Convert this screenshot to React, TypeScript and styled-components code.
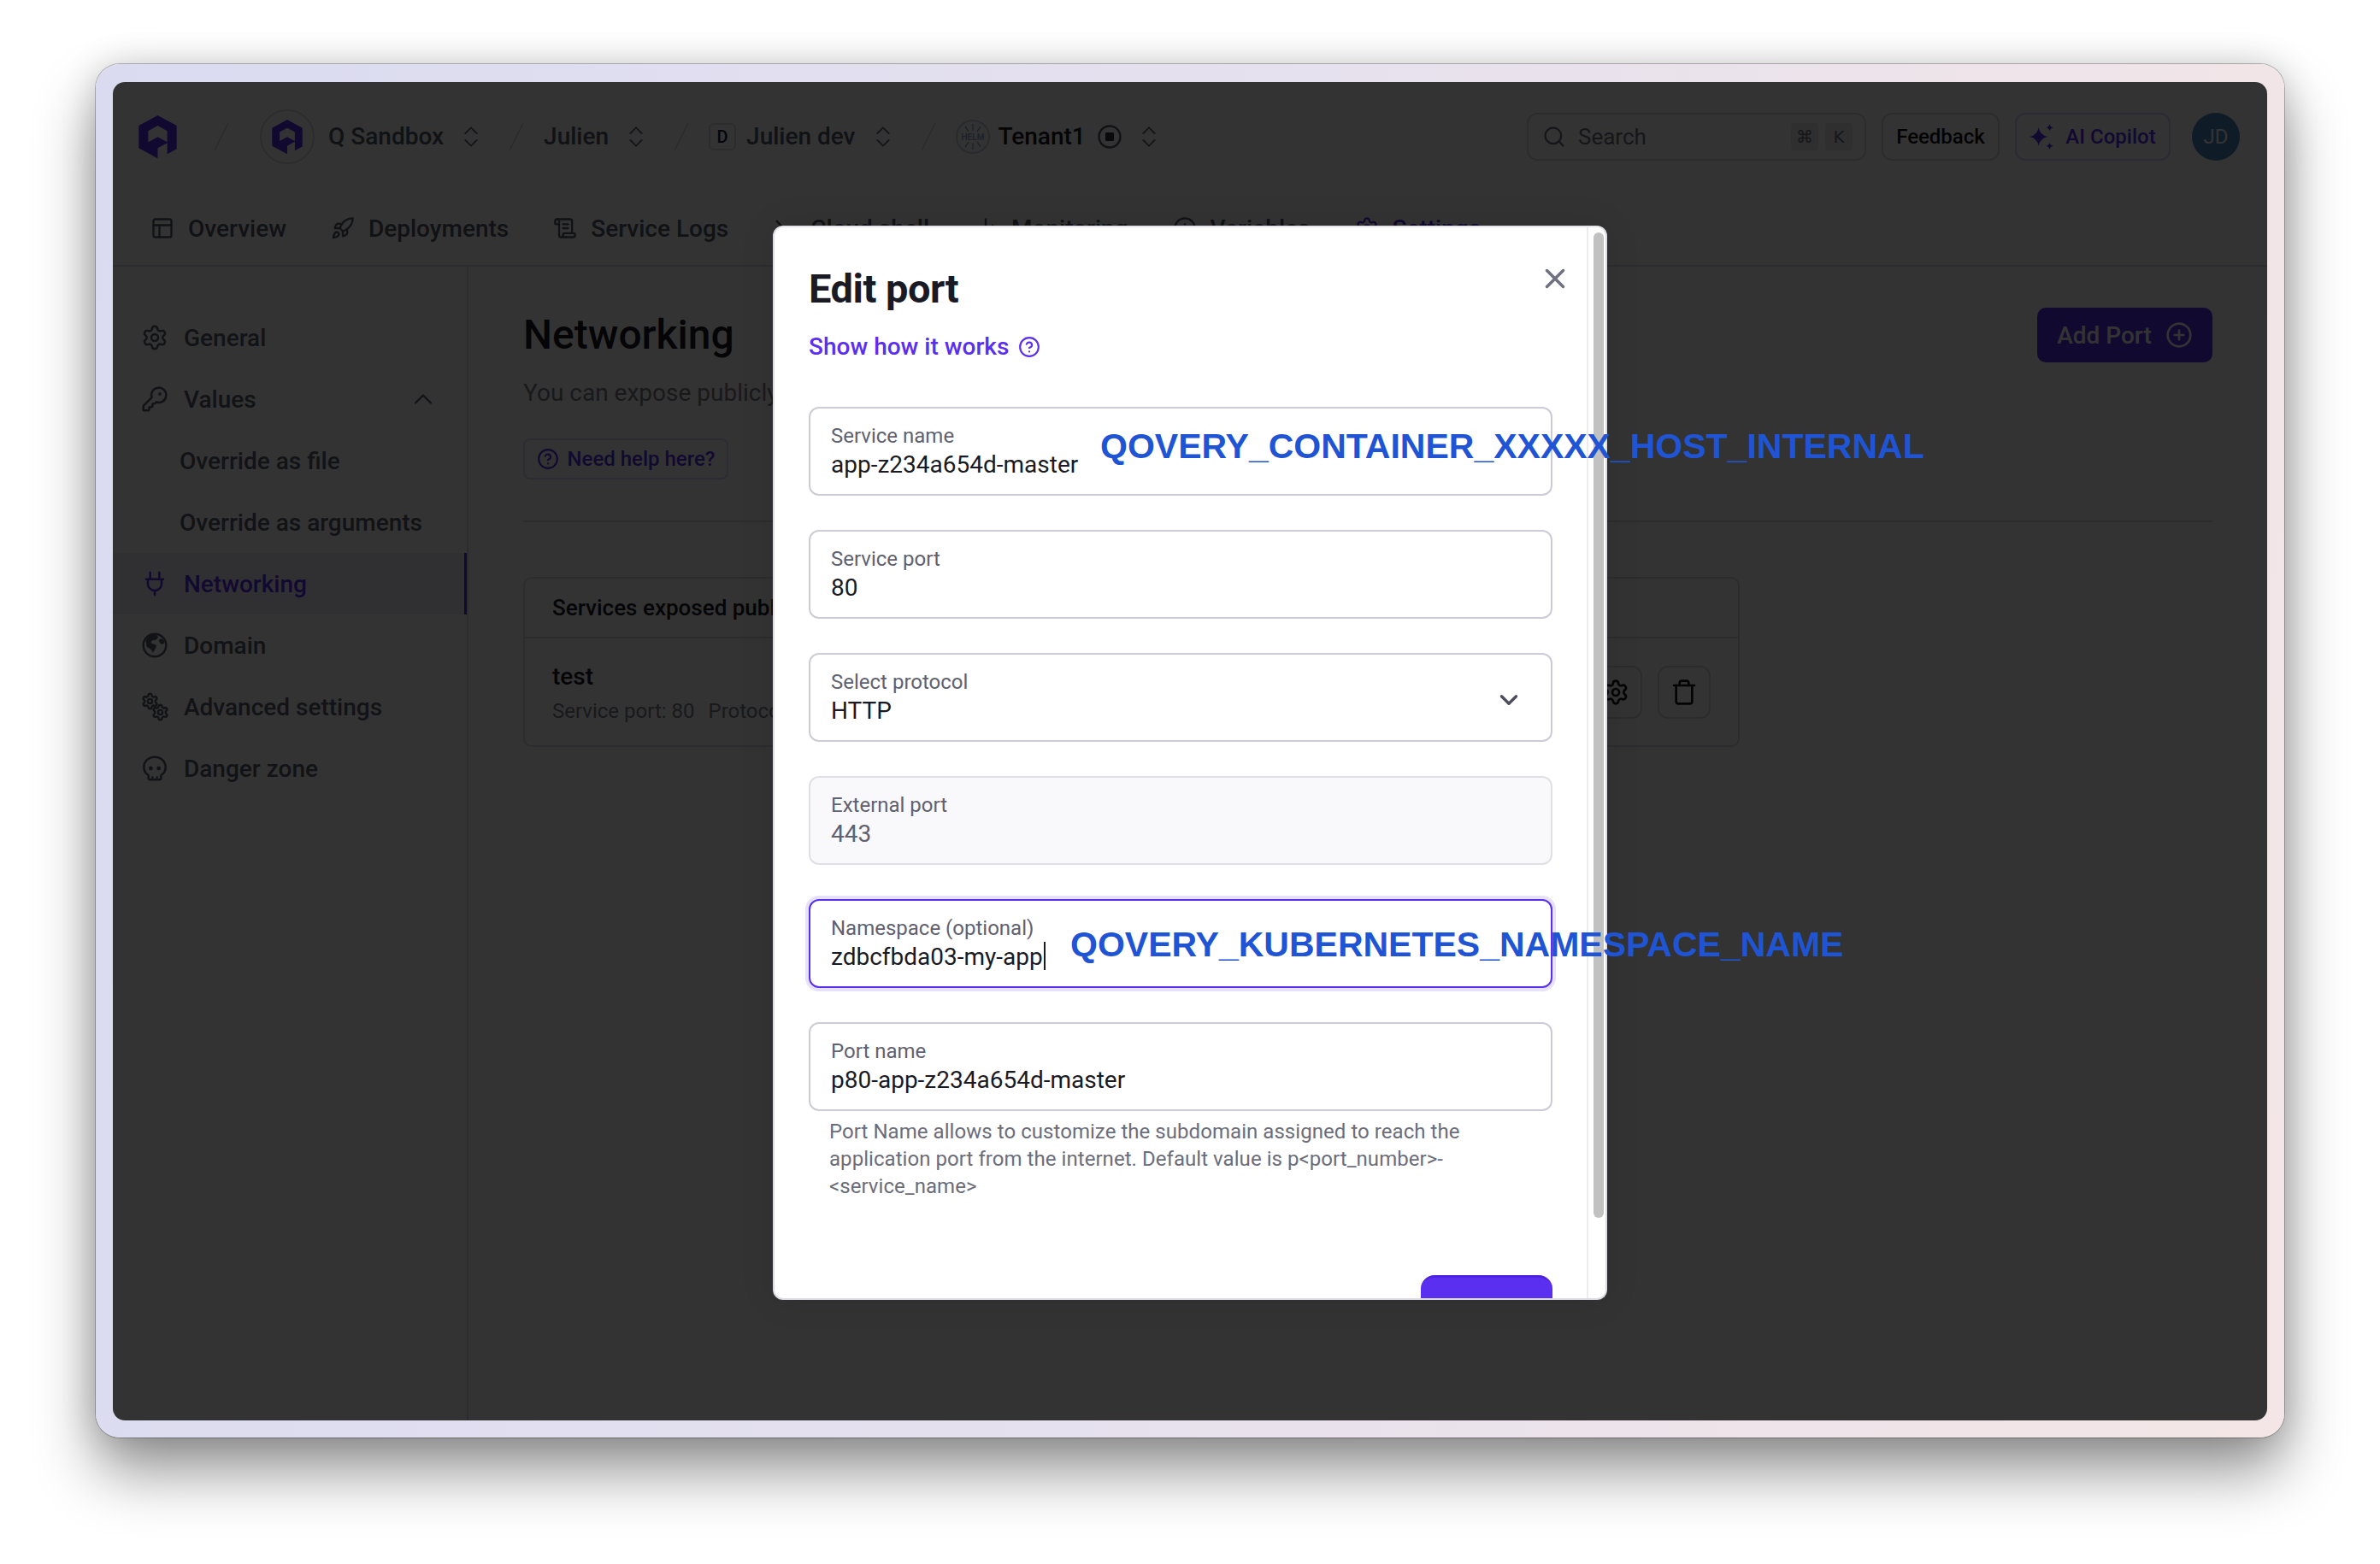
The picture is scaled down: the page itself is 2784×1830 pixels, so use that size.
import React from "react";
import styled, { createGlobalStyle } from "styled-components";
import {
  ChevronDown,
  ChevronUp,
  ChevronsUpDown,
  ChartNoAxesColumn,
  CircleHelp,
  CirclePlus,
  Info,
  KeyRound,
  PanelsTopLeft,
  Rocket,
  ScrollText,
  Search,
  Settings,
  Terminal,
  Trash,
  X,
} from "lucide-react";

const violet = "#5b2ff0";
const ink = "#1a1a24";
const gray = "#5f6170";
const line = "#dcdce4";

const GlobalStyle = createGlobalStyle`
  html, body {
    margin: 0;
    padding: 0;
    background: #fff;
  }
  body {
    font-family: Roboto, "Liberation Sans", sans-serif;
    color: ${ink};
  }
  * {
    box-sizing: border-box;
  }
`;

const Page = styled.div`
  width: 2784px;
  height: 1830px;
  padding: 75px 112px 0;
  overflow: hidden;
`;

const Frame = styled.div`
  position: relative;
  width: 2560px;
  height: 1607px;
  padding: 21px 20px 20px;
  border-radius: 28px;
  background: linear-gradient(100deg, #dadbf1 0%, #e6e1ee 50%, #f4e6e6 100%);
  box-shadow:
    0 0 0 1px rgba(0, 0, 0, 0.25),
    0 40px 70px rgba(0, 0, 0, 0.42),
    0 0 40px rgba(0, 0, 0, 0.16);
`;

const Screen = styled.div`
  position: relative;
  height: 100%;
  border-radius: 14px;
  overflow: hidden;
  background: #fff;
  display: flex;
  flex-direction: column;
`;

const Topbar = styled.header`
  height: 128px;
  flex: none;
  display: flex;
  align-items: center;
  justify-content: space-between;
  padding: 0 32px 0 30px;
`;

const Crumbs = styled.nav`
  display: flex;
  align-items: center;
`;

const LogoMark = styled.svg<{ $size: number }>`
  width: ${(p) => p.$size}px;
  height: ${(p) => p.$size * 1.12}px;
  display: block;
  flex: none;
`;

const Slash = styled.span<{ $first?: boolean }>`
  width: 16px;
  height: 32px;
  flex: none;
  margin: ${(p) => (p.$first ? "0 37px 0 44px" : "0 24px 0 29px")};
  background: linear-gradient(
    to top left,
    transparent calc(50% - 1px),
    ${line} calc(50% - 1px),
    ${line} calc(50% + 1px),
    transparent calc(50% + 1px)
  );
`;

const OrgCircle = styled.span`
  width: 64px;
  height: 64px;
  flex: none;
  border: 2px solid ${line};
  border-radius: 50%;
  display: flex;
  align-items: center;
  justify-content: center;
  margin-right: 16px;
`;

const CrumbLabel = styled.span<{ $strong?: boolean }>`
  font-size: 28px;
  line-height: 36px;
  font-weight: 500;
  color: ${(p) => (p.$strong ? ink : "#555a68")};
`;

const Updown = styled(ChevronsUpDown)`
  width: 32px;
  height: 36px;
  flex: none;
  margin-left: 16px;
  color: #6f7180;
  stroke-width: 1.5;
`;

const EnvBadge = styled.span`
  width: 32px;
  height: 32px;
  flex: none;
  margin-right: 12px;
  border: 2px solid ${line};
  border-radius: 6px;
  font-size: 20px;
  font-weight: 500;
  display: flex;
  align-items: center;
  justify-content: center;
`;

const HelmBadge = styled.svg`
  width: 40px;
  height: 40px;
  flex: none;
  margin-right: 10px;
`;

const StopIcon = styled.svg`
  width: 28px;
  height: 28px;
  flex: none;
  margin-left: 14px;
`;

const TopActions = styled.div`
  display: flex;
  align-items: center;
`;

const SearchBox = styled.div`
  width: 397px;
  height: 56px;
  border: 2px solid ${line};
  border-radius: 12px;
  display: flex;
  align-items: center;
  padding: 0 14px 0 16px;
  gap: 14px;
  font-size: 26px;
  color: #6f7180;
`;

const SearchText = styled.span`
  flex: 1;
`;

const KeyCaps = styled.span`
  display: flex;
  gap: 8px;
`;

const KeyCap = styled.span`
  width: 32px;
  height: 32px;
  border-radius: 4px;
  background: #e9e9ef;
  font-size: 20px;
  display: flex;
  align-items: center;
  justify-content: center;
  font-family: "DejaVu Sans", sans-serif;
`;

const TopButton = styled.button<{ $accent?: boolean; $width: number }>`
  width: ${(p) => p.$width}px;
  height: 56px;
  margin-left: 18px;
  padding: 0;
  border: 2px solid ${(p) => (p.$accent ? "#dcd6f6" : line)};
  border-radius: 12px;
  background: #fff;
  color: ${(p) => (p.$accent ? violet : "#111118")};
  font-family: inherit;
  font-size: 24px;
  font-weight: 500;
  display: flex;
  align-items: center;
  justify-content: center;
  gap: 12px;
`;

const Sparkle = styled.svg`
  width: 30px;
  height: 30px;
  flex: none;
`;

const Avatar = styled.span`
  width: 56px;
  height: 56px;
  margin-left: 25px;
  border-radius: 50%;
  background: #4a8ac6;
  color: #fff;
  font-size: 24px;
  display: flex;
  align-items: center;
  justify-content: center;
`;

const Tabs = styled.nav`
  height: 88px;
  flex: none;
  display: flex;
  align-items: center;
  gap: 52px;
  padding-left: 44px;
  border-bottom: 2px solid ${line};
`;

const Tab = styled.a<{ $active?: boolean }>`
  display: flex;
  align-items: center;
  gap: 16px;
  font-size: 28px;
  font-weight: 500;
  color: ${(p) => (p.$active ? violet : "#555a68")};
  svg {
    width: 28px;
    height: 28px;
    flex: none;
  }
`;

const Body = styled.div`
  flex: 1;
  display: flex;
  min-height: 0;
`;

const Sidebar = styled.aside`
  width: 416px;
  flex: none;
  padding-top: 47px;
  border-right: 2px solid ${line};
`;

const SideItem = styled.a<{ $active?: boolean; $sub?: boolean }>`
  height: 72px;
  display: flex;
  align-items: center;
  gap: 20px;
  padding: 0 30px 0 ${(p) => (p.$sub ? "78px" : "35px")};
  font-size: 28px;
  font-weight: 500;
  color: ${(p) => (p.$active ? violet : "#5d6070")};
  background: ${(p) => (p.$active ? "#f1f0fb" : "transparent")};
  border-right: 3px solid ${(p) => (p.$active ? violet : "transparent")};
`;

const SideIcon = styled.span`
  width: 28px;
  height: 32px;
  flex: none;
  display: flex;
  align-items: center;
  justify-content: center;
  svg {
    width: 32px;
    height: 32px;
    flex: none;
    stroke-width: 1.9;
  }
`;

const GearPair = styled.span`
  width: 33px;
  height: 34px;
  flex: none;
  display: grid;
  svg {
    grid-area: 1 / 1;
    width: 21px;
    height: 21px;
    stroke-width: 2.8;
  }
  svg:first-child {
    justify-self: start;
    align-self: start;
  }
  svg:last-child {
    justify-self: end;
    align-self: end;
  }
`;

const Collapse = styled(ChevronUp)`
  width: 36px;
  height: 36px;
  margin-left: auto;
  stroke-width: 1.6;
`;

const Main = styled.main`
  flex: 1;
  min-width: 0;
  padding: 48px 64px 0;
`;

const MainHeader = styled.div`
  display: flex;
  justify-content: space-between;
  align-items: flex-start;
  padding-bottom: 48px;
  border-bottom: 2px solid ${line};
`;

const PageTitle = styled.h1`
  margin: 0;
  font-size: 48px;
  line-height: 64px;
  font-weight: 500;
`;

const PageLead = styled.p`
  margin: 16px 0 33px;
  font-size: 28px;
  line-height: 40px;
  color: #7c7e8e;
`;

const HelpChip = styled.a`
  width: 240px;
  height: 48px;
  border: 2px solid #dcd6f6;
  border-radius: 8px;
  display: flex;
  align-items: center;
  justify-content: center;
  gap: 10px;
  font-size: 24px;
  font-weight: 500;
  color: ${violet};
`;

const AddPort = styled.button`
  width: 205px;
  height: 64px;
  border: none;
  border-radius: 10px;
  background: ${violet};
  color: #fff;
  font-family: inherit;
  font-size: 28px;
  font-weight: 500;
  display: flex;
  align-items: center;
  justify-content: center;
  gap: 16px;
`;

const PortsCard = styled.section`
  width: 1423px;
  height: 199px;
  margin-top: 64px;
  border: 2px solid ${line};
  border-radius: 10px;
`;

const PortsHeader = styled.div`
  height: 70px;
  display: flex;
  align-items: center;
  padding: 0 32px;
  font-size: 26px;
  font-weight: 500;
  border-bottom: 2px solid ${line};
`;

const PortRow = styled.div`
  height: 125px;
  display: flex;
  align-items: center;
  justify-content: space-between;
  padding: 0 32px;
`;

const PortInfo = styled.div`
  padding-top: 5px;
`;

const PortName = styled.div`
  font-size: 28px;
  line-height: 32px;
  font-weight: 500;
`;

const PortMeta = styled.div`
  margin-top: 8px;
  display: flex;
  gap: 16px;
  font-size: 24px;
  line-height: 32px;
  color: #7c7e8e;
`;

const RowActions = styled.div`
  display: flex;
  gap: 18px;
`;

const IconButton = styled.button`
  width: 62px;
  height: 62px;
  padding: 0;
  border: 2px solid ${line};
  border-radius: 12px;
  background: #fff;
  color: #111118;
  display: flex;
  align-items: center;
  justify-content: center;
  svg {
    width: 32px;
    height: 32px;
  }
`;

const Overlay = styled.div`
  position: absolute;
  inset: 0;
  background: rgba(0, 0, 0, 0.8);
  display: flex;
  justify-content: center;
  align-items: flex-start;
  padding-top: 168px;
`;

const Modal = styled.div`
  position: relative;
  width: 976px;
  height: 1257px;
  border: 2px solid #dcdce2;
  border-top-color: #e6e6ea;
  border-radius: 12px;
  background: #fff;
  overflow: hidden;
  display: flex;
  box-shadow: 0 0 40px rgba(0, 0, 0, 0.1);
`;

const ModalBody = styled.form`
  flex: 1;
  min-width: 0;
  padding: 44px 40px 0;
`;

const ModalTitle = styled.h2`
  margin: 0;
  font-size: 47px;
  line-height: 56px;
  font-weight: 700;
  letter-spacing: -0.5px;
`;

const HowLink = styled.a`
  margin: 20px 0 50px;
  display: flex;
  align-items: center;
  gap: 11px;
  font-size: 28px;
  line-height: 40px;
  font-weight: 500;
  color: ${violet};
  svg {
    width: 26px;
    height: 26px;
  }
`;

const CloseButton = styled(X)`
  position: absolute;
  top: 41px;
  right: 40px;
  width: 38px;
  height: 38px;
  color: #6f7180;
  stroke-width: 2.2;
`;

const FieldStack = styled.div`
  display: flex;
  flex-direction: column;
  gap: 40px;
`;

const Field = styled.div<{ $disabled?: boolean; $focused?: boolean }>`
  height: 104px;
  padding: 17px 32px 0 24px;
  border: 2px solid
    ${(p) => (p.$focused ? violet : p.$disabled ? "#dfe0e6" : "#cbccd6")};
  border-radius: 12px;
  background: ${(p) => (p.$disabled ? "#f9f9fb" : "#fff")};
  box-shadow: ${(p) => (p.$focused ? "0 0 0 4px #e6e2fc" : "none")};
  display: flex;
  justify-content: space-between;
`;

const FieldLabel = styled.div`
  font-size: 24px;
  line-height: 30px;
  color: ${gray};
`;

const FieldValue = styled.div<{ $muted?: boolean }>`
  margin-top: 1px;
  font-size: 28px;
  line-height: 36px;
  white-space: nowrap;
  color: ${(p) => (p.$muted ? gray : ink)};
`;

const Caret = styled.span`
  display: inline-block;
  width: 2px;
  height: 33px;
  margin-left: 1px;
  vertical-align: -6px;
  background: ${ink};
`;

const SelectArrow = styled(ChevronDown)`
  width: 34px;
  height: 34px;
  margin-top: 19px;
  color: #4c4e5c;
  stroke-width: 2.4;
`;

const FieldHint = styled.p`
  margin: 8px 0 0 24px;
  width: 822px;
  font-size: 24px;
  line-height: 32px;
  letter-spacing: 0.05px;
  color: #6b6d7b;
`;

const Footer = styled.div`
  margin-top: 88px;
  display: flex;
  justify-content: flex-end;
`;

const Submit = styled.button`
  width: 154px;
  height: 64px;
  border: none;
  border-top: 3px solid #4d22e0;
  border-radius: 16px;
  background: ${violet};
`;

const ScrollTrack = styled.div`
  width: 22px;
  flex: none;
  padding: 6px 4px 0 6px;
  border-left: 2px solid #ececee;
`;

const ScrollThumb = styled.div`
  width: 12px;
  height: 1153px;
  border-radius: 6px;
  background: #c1c1c1;
`;

const Annotation = styled.span<{ $left: number; $top: number }>`
  position: absolute;
  left: ${(p) => p.$left}px;
  top: ${(p) => p.$top}px;
  font-family: "Liberation Sans", Arial, sans-serif;
  font-size: 41px;
  line-height: 48px;
  font-weight: 700;
  white-space: nowrap;
  color: #1f55d4;
`;

const QLogo = ({ size }: { size: number }) => (
  <LogoMark $size={size} viewBox="0 0 44 50">
    <path
      fill={violet}
      fillRule="evenodd"
      d="M22 0 44 12V39L33 45V32L22 38V50L0 38V12ZM22 12 11 18V31L22 25 33 31V18Z"
    />
  </LogoMark>
);

const PlugIcon = () => (
  <svg viewBox="0 0 24 24" fill="none" stroke="currentColor" strokeWidth="2" strokeLinecap="round">
    <path d="M8 2v6M16 2v6M4.5 8h15M6 8v4a6 6 0 0 0 12 0V8M12 18v4" />
  </svg>
);

const GlobeIcon = () => (
  <svg viewBox="0 0 24 24" fill="none" stroke="currentColor" strokeWidth="2">
    <circle cx="12" cy="12" r="10" />
    <path
      fill="currentColor"
      stroke="none"
      d="M4 8c2-4 6-6 9-5 3 1 2 3 0 4-1 1-3 0-4 2-1 1 1 2 2 2 2 0 3 1 2 3-1 2-2 4-3 5 0-3-2-4-4-5-2-1-1-4-2-6zM16 7c1-1 3-1 4 1 1 2 0 3-2 3-1 0-3-3-2-4z"
    />
  </svg>
);

const SkullIcon = () => (
  <svg viewBox="0 0 24 24" fill="none" stroke="currentColor" strokeWidth="2" strokeLinejoin="round">
    <path d="M12 2C6.5 2 2.5 6 2.5 11c0 3.2 1.6 5.6 4 7v2.5A1.5 1.5 0 0 0 8 22h8a1.5 1.5 0 0 0 1.5-1.5V18c2.4-1.4 4-3.8 4-7 0-5-4-9-9.5-9z" />
    <circle cx="8.5" cy="12" r="1.8" fill="currentColor" stroke="none" />
    <circle cx="15.5" cy="12" r="1.8" fill="currentColor" stroke="none" />
    <path d="M10 19v3M14 19v3" strokeWidth="1.6" />
  </svg>
);

const menu = [
  { label: "General", icon: <Settings /> },
  { label: "Values", icon: <KeyRound />, open: true },
  { label: "Override as file", sub: true },
  { label: "Override as arguments", sub: true },
  { label: "Networking", icon: <PlugIcon />, active: true },
  { label: "Domain", icon: <GlobeIcon /> },
  {
    label: "Advanced settings",
    icon: (
      <GearPair>
        <Settings />
        <Settings />
      </GearPair>
    ),
  },
  { label: "Danger zone", icon: <SkullIcon /> },
];

const tabs = [
  { label: "Overview", icon: <PanelsTopLeft /> },
  { label: "Deployments", icon: <Rocket /> },
  { label: "Service Logs", icon: <ScrollText /> },
  { label: "Cloud shell", icon: <Terminal /> },
  { label: "Monitoring", icon: <ChartNoAxesColumn /> },
  { label: "Variables", icon: <Info /> },
  { label: "Settings", icon: <Settings />, active: true },
];

const App = () => {
  return (
    <Page>
      <GlobalStyle />
      <Frame>
        <Screen>
          <Topbar>
            <Crumbs>
              <QLogo size={45} />
              <Slash $first />
              <OrgCircle>
                <QLogo size={36} />
              </OrgCircle>
              <CrumbLabel>Q Sandbox</CrumbLabel>
              <Updown />
              <Slash />
              <CrumbLabel>Julien</CrumbLabel>
              <Updown />
              <Slash />
              <EnvBadge>D</EnvBadge>
              <CrumbLabel>Julien dev</CrumbLabel>
              <Updown />
              <Slash />
              <HelmBadge viewBox="0 0 40 40">
                <circle cx="20" cy="20" r="19" fill="#fff" stroke="#c9d2de" strokeWidth="2" />
                <path
                  fill="none"
                  stroke="#9aa4d0"
                  strokeWidth="1.4"
                  d="M20 5v8M11 8l4 6M29 8l-4 6M20 27v8M11 32l4-6M29 32l-4-6"
                />
                <text
                  x="20"
                  y="24"
                  textAnchor="middle"
                  fontFamily="Roboto, sans-serif"
                  fontWeight="700"
                  fontSize="10"
                  fill="#9aa4d0"
                >
                  HELM
                </text>
              </HelmBadge>
              <CrumbLabel $strong>Tenant1</CrumbLabel>
              <StopIcon viewBox="0 0 28 28">
                <circle cx="14" cy="14" r="12.5" fill="none" stroke="#555a68" strokeWidth="2.4" />
                <rect x="9" y="9" width="10" height="10" rx="1" fill="#333644" />
              </StopIcon>
              <Updown />
            </Crumbs>
            <TopActions>
              <SearchBox>
                <Search size={28} />
                <SearchText>Search</SearchText>
                <KeyCaps>
                  <KeyCap>⌘</KeyCap>
                  <KeyCap>K</KeyCap>
                </KeyCaps>
              </SearchBox>
              <TopButton $width={138}>Feedback</TopButton>
              <TopButton $accent $width={182}>
                <Sparkle viewBox="0 0 28 28">
                  <path
                    fill={violet}
                    d="M10 4Q11.5 12.5 20 14 11.5 15.5 10 24 8.5 15.5 0 14 8.5 12.5 10 4ZM22 0Q22.6 3.4 26 4 22.6 4.6 22 8 21.4 4.6 18 4 21.4 3.4 22 0ZM22 20Q22.6 23.4 26 24 22.6 24.6 22 28 21.4 24.6 18 24 21.4 23.4 22 20Z"
                  />
                </Sparkle>
                AI Copilot
              </TopButton>
              <Avatar>JD</Avatar>
            </TopActions>
          </Topbar>
          <Tabs>
            {tabs.map((tab) => (
              <Tab key={tab.label} $active={tab.active}>
                {tab.icon}
                {tab.label}
              </Tab>
            ))}
          </Tabs>
          <Body>
            <Sidebar>
              {menu.map((item) => (
                <SideItem key={item.label} $active={item.active} $sub={item.sub}>
                  {item.icon && <SideIcon>{item.icon}</SideIcon>}
                  {item.label}
                  {item.open && <Collapse />}
                </SideItem>
              ))}
            </Sidebar>
            <Main>
              <MainHeader>
                <div>
                  <PageTitle>Networking</PageTitle>
                  <PageLead>You can expose publicly your application</PageLead>
                  <HelpChip>
                    <CircleHelp size={26} />
                    Need help here?
                  </HelpChip>
                </div>
                <AddPort>
                  Add Port
                  <CirclePlus size={32} />
                </AddPort>
              </MainHeader>
              <PortsCard>
                <PortsHeader>Services exposed publicly</PortsHeader>
                <PortRow>
                  <PortInfo>
                    <PortName>test</PortName>
                    <PortMeta>
                      <span>Service port: 80</span>
                      <span>Protocol</span>
                    </PortMeta>
                  </PortInfo>
                  <RowActions>
                    <IconButton>
                      <Settings />
                    </IconButton>
                    <IconButton>
                      <Trash />
                    </IconButton>
                  </RowActions>
                </PortRow>
              </PortsCard>
            </Main>
          </Body>
          <Overlay>
            <Modal>
              <ModalBody>
                <ModalTitle>Edit port</ModalTitle>
                <HowLink>
                  Show how it works
                  <CircleHelp />
                </HowLink>
                <FieldStack>
                  <Field>
                    <div>
                      <FieldLabel>Service name</FieldLabel>
                      <FieldValue>app-z234a654d-master</FieldValue>
                    </div>
                  </Field>
                  <Field>
                    <div>
                      <FieldLabel>Service port</FieldLabel>
                      <FieldValue>80</FieldValue>
                    </div>
                  </Field>
                  <Field>
                    <div>
                      <FieldLabel>Select protocol</FieldLabel>
                      <FieldValue>HTTP</FieldValue>
                    </div>
                    <SelectArrow />
                  </Field>
                  <Field $disabled>
                    <div>
                      <FieldLabel>External port</FieldLabel>
                      <FieldValue $muted>443</FieldValue>
                    </div>
                  </Field>
                  <Field $focused>
                    <div>
                      <FieldLabel>Namespace (optional)</FieldLabel>
                      <FieldValue>
                        zdbcfbda03-my-app
                        <Caret />
                      </FieldValue>
                    </div>
                  </Field>
                  <Field>
                    <div>
                      <FieldLabel>Port name</FieldLabel>
                      <FieldValue>p80-app-z234a654d-master</FieldValue>
                    </div>
                  </Field>
                </FieldStack>
                <FieldHint>
                  Port Name allows to customize the subdomain assigned to reach the application port
                  from the internet. Default value is p&lt;port_number&gt;-&lt;service_name&gt;
                </FieldHint>
                <Footer>
                  <Submit type="button" aria-label="Confirm" />
                </Footer>
              </ModalBody>
              <ScrollTrack>
                <ScrollThumb />
              </ScrollTrack>
              <CloseButton />
            </Modal>
          </Overlay>
        </Screen>
        <Annotation $left={1175} $top={423}>
          QOVERY_CONTAINER_XXXXX_HOST_INTERNAL
        </Annotation>
        <Annotation $left={1140} $top={1006}>
          QOVERY_KUBERNETES_NAMESPACE_NAME
        </Annotation>
      </Frame>
    </Page>
  );
};

export default App;
